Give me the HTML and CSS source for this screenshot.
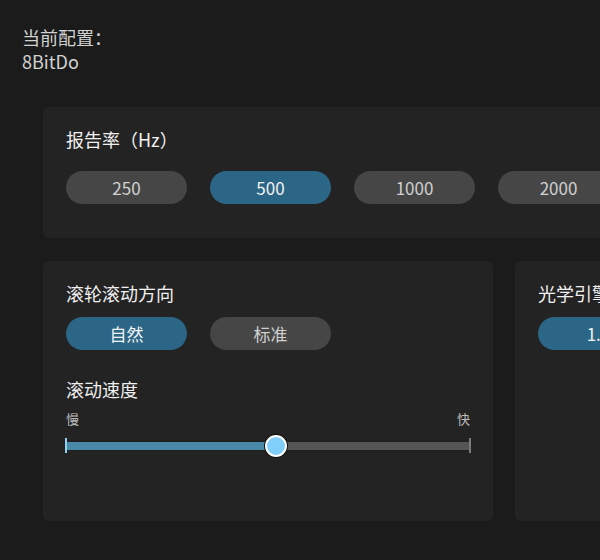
FILE: index.html
```html
<!DOCTYPE html>
<html lang="zh">
<head>
<meta charset="utf-8">
<link rel="stylesheet" href="styles.css">
</head>
<body>
<div class="page">
  <div class="header">
    <div class="line">当前配置：</div>
    <div class="line">8BitDo</div>
  </div>
  <div class="card card-wide">
    <div class="title">报告率（Hz）</div>
    <div class="pills">
      <div class="pill">250</div>
      <div class="pill active">500</div>
      <div class="pill">1000</div>
      <div class="pill">2000</div>
      <div class="pill">4000</div>
    </div>
  </div>
  <div class="row">
    <div class="card card-half">
      <div class="title">滚轮滚动方向</div>
      <div class="pills">
        <div class="pill active">自然</div>
        <div class="pill">标准</div>
      </div>
      <div class="title title-gap">滚动速度</div>
      <div class="slider-labels"><span>慢</span><span>快</span></div>
      <div class="slider">
        <div class="track"></div>
        <div class="fill" style="width:52%"></div>
        <div class="tick tick-left"></div>
        <div class="tick tick-right"></div>
        <div class="thumb" style="left:52%"></div>
      </div>
    </div>
    <div class="card card-half">
      <div class="title">光学引擎高度</div>
      <div class="pills">
        <div class="pill active">1.0</div>
        <div class="pill">2.0</div>
      </div>
    </div>
  </div>
</div>
</body>
</html>
```

FILE: styles.css
```css
html, body {
  margin: 0;
  padding: 0;
  background: #1b1b1b;
  overflow: hidden;
}
body {
  width: 600px;
  height: 560px;
  font-family: "Noto Sans CJK SC", "Noto Sans", sans-serif;
  color: #eeeeee;
}
.page {
  display: flex;
  flex-direction: column;
  width: 600px;
}
.header {
  padding: 25px 22px 0;
  color: #d2d2d2;
  font-size: 18px;
  line-height: 24px;
}
.card {
  background: #232323;
  border-radius: 6px;
  box-sizing: border-box;
  flex-shrink: 0;
}
.card-wide {
  margin: 34px 0 0 43px;
  width: 922px;
  padding: 20px 23px 34px;
}
.row {
  display: flex;
  gap: 22px;
  margin: 23px 0 0 43px;
  width: 922px;
}
.card-half {
  width: 450px;
  height: 260px;
  padding: 20px 23px;
}
.title {
  font-size: 18px;
  line-height: 24px;
  color: #f0f0f0;
}
.card-wide .pills {
  margin-top: 20px;
}
.pills {
  display: flex;
  gap: 23px;
  margin-top: 12px;
}
.pill {
  width: 121px;
  height: 33px;
  border-radius: 17px;
  background: #464646;
  color: #d0d0d0;
  font-size: 17px;
  display: flex;
  align-items: center;
  justify-content: center;
  flex-shrink: 0;
}
.pill.active {
  background: #2b6686;
  color: #f2f2f2;
}
.title-gap {
  margin-top: 27px;
}
.slider-labels {
  display: flex;
  justify-content: space-between;
  font-size: 13px;
  line-height: 18px;
  color: #bdbdbd;
  margin-top: 9px;
}
.slider {
  position: relative;
  height: 22px;
  margin-top: 7px;
}
.track {
  position: absolute;
  left: 0;
  right: 0;
  top: 7px;
  height: 8px;
  background: #555555;
  box-shadow: 0 0 0 1px #1e1e1e;
}
.fill {
  position: absolute;
  left: 0;
  top: 7px;
  height: 8px;
  background: #4a8aa9;
}
.tick {
  position: absolute;
  top: 3px;
  width: 2px;
  height: 15px;
}
.tick-left {
  left: -1px;
  background: #8fd0f0;
}
.tick-right {
  right: -1px;
  background: #7a7a7a;
}
.thumb {
  position: absolute;
  top: 0;
  width: 18px;
  height: 18px;
  margin-left: -11px;
  border-radius: 50%;
  background: #80cffa;
  border: 2px solid #ffffff;
  box-shadow: 0 0 0 1px #111;
}
```
